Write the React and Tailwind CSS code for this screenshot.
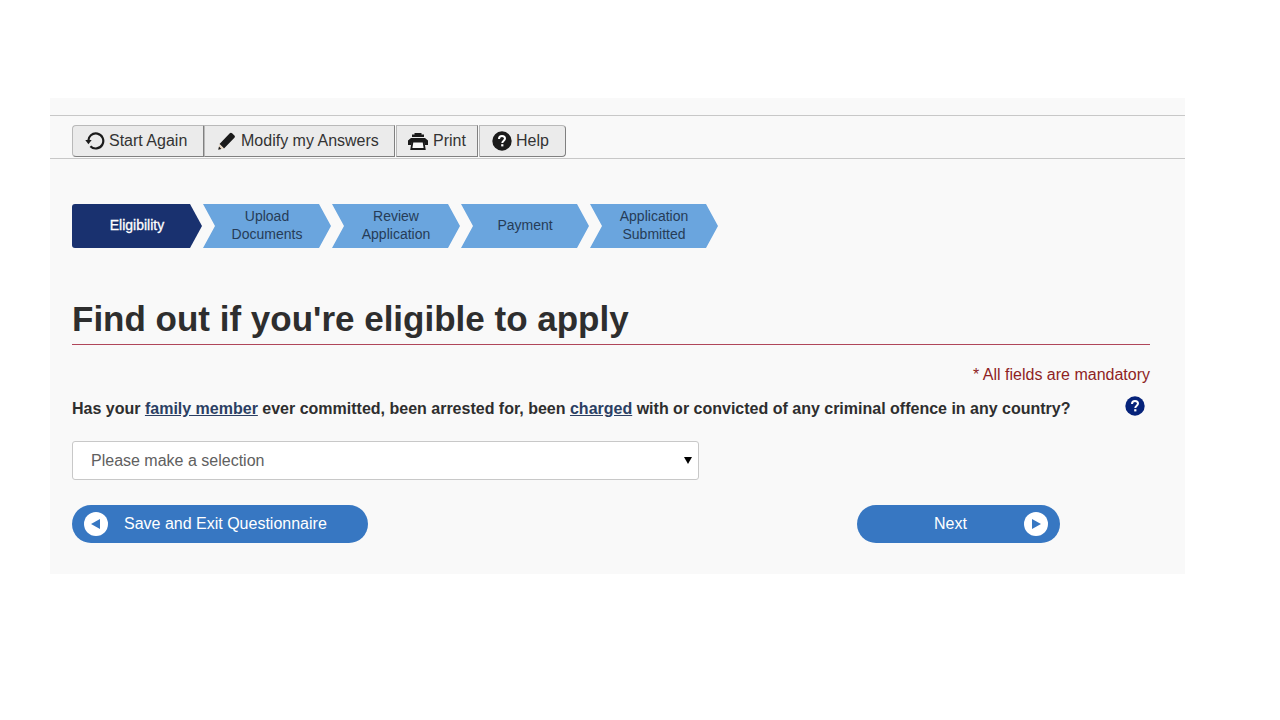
import React from 'react';

const RestartIcon = () => (
  <svg className="w-5 h-5 shrink-0" viewBox="0 0 20 20" aria-hidden="true">
    <path d="M3.300 10.500a7.500 7.500 0 1 1 2.100 4.700" fill="none" stroke="#1b1b1b" strokeWidth="2.200" />
    <path d="M0.300 9h6.400l-3.300 4.300z" fill="#1b1b1b" />
  </svg>
);

const PencilIcon = () => (
  <svg className="w-5 h-5 shrink-0" viewBox="0 0 20 20" aria-hidden="true">
    <path d="M2.500 13L12.800 2.200c.7-.7 1.600-.7 2.300 0l2.300 2.300c.7.7.7 1.600 0 2.300L7 17.500z" fill="#1b1b1b" />
    <path d="M2.500 13L7 17.500l-5.500 1z" fill="#e8d6c0" />
    <path d="M2 15.600l2.400 2.400-3.200.8z" fill="#1b1b1b" />
  </svg>
);

const PrintIcon = () => (
  <svg className="w-[22px] h-5 shrink-0" viewBox="0 0 22 20" aria-hidden="true">
    <path d="M7.500 2h7v1.500H17V6H5V3.500h2.500z" fill="#1b1b1b" />
    <path d="M4 7h14l3 2.500V14h-3.300l-.9-4H5.200l-.9 4H1V9.500z" fill="#1b1b1b" />
    <path d="M5.500 10.500h11l1.200 7.500H4.300z" fill="#fafafa" stroke="#1b1b1b" strokeWidth="1.800" />
  </svg>
);

const HelpIcon = ({ color = '#1b1b1b' }) => (
  <svg className="w-5 h-5 shrink-0" viewBox="0 0 20 20" aria-hidden="true">
    <circle cx="10" cy="10" r="9.700" fill={color} />
    <path d="M7 8c0-1.900 1.200-3 3-3s3 1 3 2.600c0 2.100-2.700 2.100-2.700 4.400" fill="none" stroke="#fff" strokeWidth="2" />
    <rect x="9.200" y="13.200" width="2.200" height="2.200" fill="#fff" />
  </svg>
);

const ArrowBadge = ({ direction }) => (
  <svg className="w-6 h-6 shrink-0" viewBox="0 0 24 24" aria-hidden="true">
    <circle cx="12" cy="12" r="12" fill="#fff" />
    <path d={direction === 'left' ? 'M7 12l9-5v10z' : 'M17 12L8 7v10z'} fill="#3777c2" />
  </svg>
);

const tools = [
  { label: 'Start Again', icon: RestartIcon, style: 'w-[132px] pl-3 rounded-l' },
  { label: 'Modify my Answers', icon: PencilIcon, style: 'w-[191px] pl-3' },
  { label: 'Print', icon: PrintIcon, style: 'w-[82px] pl-[10px] ml-px' },
  { label: 'Help', icon: HelpIcon, style: 'w-[87px] pl-3 ml-px rounded-r' },
];

const steps = [
  { label: 'Eligibility', current: true },
  { label: 'Upload Documents' },
  { label: 'Review Application' },
  { label: 'Payment' },
  { label: 'Application Submitted' },
];

const Toolbar = () => (
  <div className="flex border-y border-[#c8c8c8] pl-[22px] pt-[9px] pb-px">
    {tools.map(({ label, icon: Icon, style }) => (
      <button
        key={label}
        type="button"
        className={`flex h-8 items-center gap-1 whitespace-nowrap border border-[#b9b9b9] border-r-[#808080] border-b-[#808080] bg-[#ebebeb] text-[#333] ${style}`}
      >
        <Icon />
        {label}
      </button>
    ))}
  </div>
);

const Steps = () => (
  <ol className="flex gap-px text-sm leading-[18px]">
    {steps.map(({ label, current }) => (
      <li
        key={label}
        aria-current={current ? 'step' : undefined}
        className={`flex h-11 items-center justify-center pb-0.5 text-center ${
          current
            ? 'w-[130px] rounded-l-[3px] bg-[#19316f] text-white [-webkit-text-stroke:0.3px_white] [clip-path:polygon(0_0,calc(100%-12px)_0,100%_50%,calc(100%-12px)_100%,0_100%)]'
            : 'w-32 bg-[#6aa5de] px-5 text-[#263c57] [clip-path:polygon(0_0,calc(100%-12px)_0,100%_50%,calc(100%-12px)_100%,0_100%,12px_50%)]'
        }`}
      >
        {label}
      </li>
    ))}
  </ol>
);

const App = () => (
  <div className="min-h-screen bg-white pt-[98px] pl-[50px] pr-[95px] font-['Liberation_Sans',Arial,sans-serif] text-base text-[#2e2e2e]">
    <main className="bg-[#f9f9f9] pt-[17px] pb-[31px]">
      <Toolbar />
      <div className="pl-[22px] pr-[35px] pt-[45px]">
        <Steps />

        <h1 className="mt-[50px] border-b border-[#b0465a] pb-1 text-[35px] leading-[42px] font-bold">
          Find out if you're eligible to apply
        </h1>
        <p className="mt-[18px] text-right leading-6 text-[#8f1f24]">* All fields are mandatory</p>

        <form onSubmit={(e) => e.preventDefault()}>
          <div className="mt-[9px] flex items-start justify-between pr-[5px]">
            <label htmlFor="offence" className="leading-[26px] font-bold">
              Has your <a href="#family-member" className="text-[#2b3f63] underline">family member</a> ever
              committed, been arrested for, been <a href="#charged" className="text-[#2b3f63] underline">charged</a> with
              or convicted of any criminal offence in any country?
            </label>
            <button type="button" aria-label="Help with this question">
              <HelpIcon color="#06237a" />
            </button>
          </div>

          <div className="relative mt-[19px] w-[627px] max-w-full">
            <select
              id="offence"
              className="h-[39px] w-full appearance-none rounded-[3px] border border-[#c8c8c8] bg-white pl-[18px] text-[#606060]"
            >
              <option>Please make a selection</option>
            </select>
            <svg className="pointer-events-none absolute right-[7px] top-4 h-[7px] w-2" viewBox="0 0 8 7" aria-hidden="true">
              <path d="M0 0h8L4 7z" fill="#000" />
            </svg>
          </div>

          <div className="mt-[25px] flex justify-between pr-[90px] text-white">
            <button type="button" className="flex h-[38px] w-[296px] items-center gap-4 rounded-full bg-[#3777c2] pl-3">
              <ArrowBadge direction="left" />
              Save and Exit Questionnaire
            </button>
            <button type="submit" className="flex h-[38px] w-[203px] items-center rounded-full bg-[#3777c2] pr-3">
              <span className="flex-1 pl-5">Next</span>
              <ArrowBadge direction="right" />
            </button>
          </div>
        </form>
      </div>
    </main>
  </div>
);

export default App;
